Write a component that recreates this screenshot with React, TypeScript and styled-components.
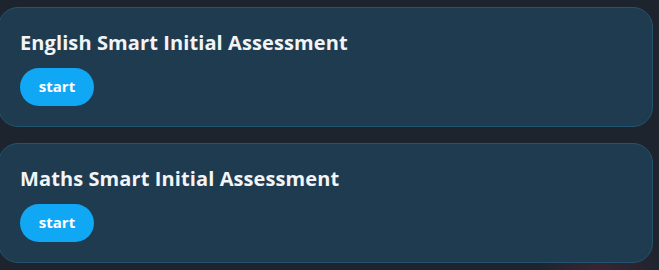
import styled, { createGlobalStyle } from "styled-components";

const GlobalStyle = createGlobalStyle`
  html, body {
    margin: 0;
    padding: 0;
    background: #1e242e;
  }
  body {
    font-family: "Open Sans", "Noto Sans", sans-serif;
  }
`;

const assessments = [
  { id: "english", title: "English Smart Initial Assessment" },
  { id: "maths", title: "Maths Smart Initial Assessment" },
];

export default function App() {
  return (
    <>
      <GlobalStyle />
      <Page>
        <CardList>
          {assessments.map((a) => (
            <Card key={a.id}>
              <Title>{a.title}</Title>
              <StartButton>start</StartButton>
            </Card>
          ))}
        </CardList>
      </Page>
    </>
  );
}

const Page = styled.div`
  width: 659px;
  height: 270px;
  overflow: hidden;
  background: radial-gradient(
      circle at 600px 275px,
      rgba(120, 40, 60, 0.3),
      rgba(30, 36, 46, 0) 60px
    ),
    #1e242e;
  padding-top: 7px;
  box-sizing: border-box;
`;

const CardList = styled.div`
  display: flex;
  flex-direction: column;
  gap: 16px;
  margin-left: -2px;
  width: 655px;
`;

const Card = styled.div`
  box-sizing: border-box;
  height: 120px;
  padding: 21px 21px 0;
  border-radius: 20px;
  background: #1f3b4f;
  border: 1px solid #22546f;
  display: flex;
  flex-direction: column;
  align-items: flex-start;
  gap: 12px;
`;

const Title = styled.h2`
  margin: 0;
  color: #f2f4f6;
  font-size: 20px;
  font-weight: 700;
  line-height: 27px;
  letter-spacing: 0.1px;
`;

const StartButton = styled.button`
  height: 38px;
  width: 74px;
  border: none;
  border-radius: 19px;
  background: #10a8f5;
  color: #ffffff;
  font-family: "Open Sans", "Noto Sans", sans-serif;
  font-size: 15px;
  font-weight: 700;
  cursor: pointer;
  padding: 0 0 3px;
`;
